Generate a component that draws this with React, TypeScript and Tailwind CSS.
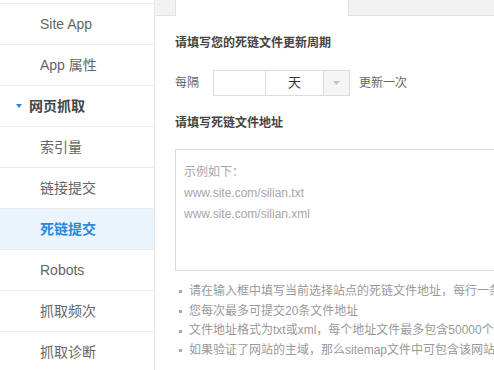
import React from "react";

const font = { fontFamily: '"Liberation Sans", "Noto Sans CJK SC", Arial, sans-serif' };

function Row({ children, active }: { children: React.ReactNode; active?: boolean }) {
  return (
    <div
      className={
        "h-[41px] border-b border-[#ebebeb] flex items-center pl-[40px] text-[14px] " +
        (active ? "bg-[#e9f4fd] text-[#2b86dc] font-bold" : "text-[#666]")
      }
    >
      {children}
    </div>
  );
}

export default function App() {
  return (
    <div className="w-[494px] h-[370px] overflow-hidden bg-white flex" style={font}>
      <div className="w-[155px] shrink-0 border-r border-[#e8e8e8] h-full">
        <div className="h-[4px] border-b border-[#ebebeb]" />
        <Row>Site App</Row>
        <Row>App 属性</Row>
        <div className="h-[41px] border-b border-[#ebebeb] flex items-center pl-[16px] text-[14px] font-bold text-[#444]">
          <svg width="6" height="4" viewBox="0 0 6 4" className="mr-[7px]">
            <polygon points="0,0 6,0 3,4" fill="#2b86dc" />
          </svg>
          网页抓取
        </div>
        <Row>索引量</Row>
        <Row>链接提交</Row>
        <Row active>死链提交</Row>
        <Row>Robots</Row>
        <Row>抓取频次</Row>
        <Row>抓取诊断</Row>
      </div>
      <div className="flex-1 min-w-0 overflow-hidden">
        <div className="h-[16px] bg-[#f2f2f2] border-b border-[#e1e1e1] flex">
          <div className="w-[20px] h-full" />
          <div className="w-[174px] h-[16px] bg-white border-l border-r border-[#e1e1e1]" />
        </div>
        <div className="pl-[20px]">
          <div className="mt-[17px] h-[20px] leading-[20px] text-[12px] font-bold text-[#444]">
            请填写您的死链文件更新周期
          </div>
          <div className="mt-[17px] h-[26px] flex items-center text-[12px] text-[#666]">
            <span className="w-[38px]">每隔</span>
            <div className="w-[53px] h-[26px] border border-[#dcdcdc]" />
            <div className="w-[84px] h-[26px] border border-l-0 border-[#dcdcdc] flex">
              <div className="flex-1 flex items-center justify-center text-[13px] text-[#333]">天</div>
              <div className="w-[26px] bg-[#f5f5f5] border-l border-[#dcdcdc] flex items-center justify-center">
                <svg width="7" height="4" viewBox="0 0 7 4">
                  <polygon points="0,0 7,0 3.5,4" fill="#c4c4c4" />
                </svg>
              </div>
            </div>
            <span className="ml-[9px]">更新一次</span>
          </div>
          <div className="mt-[17px] h-[20px] leading-[20px] text-[12px] font-bold text-[#444]">
            请填写死链文件地址
          </div>
          <div className="mt-[16px] w-[400px] h-[122px] border border-[#dcdcdc] pt-[12px] pl-[8px] text-[12px] leading-[21px] text-[#a6a6a6]">
            <div>示例如下：</div>
            <div>www.site.com/silian.txt</div>
            <div>www.site.com/silian.xml</div>
          </div>
          <ul className="mt-[11px] text-[12px] leading-[19.7px] text-[#999] whitespace-nowrap">
            {[
              "请在输入框中填写当前选择站点的死链文件地址，每行一条",
              "您每次最多可提交20条文件地址",
              "文件地址格式为txt或xml，每个地址文件最多包含50000个网址",
              "如果验证了网站的主域，那么sitemap文件中可包含该网站的子域",
            ].map((t) => (
              <li key={t} className="flex items-center">
                <span className="shrink-0 ml-[4px] mr-[7px] w-[3px] h-[3px] bg-[#aaa] inline-block" />
                <span className="shrink-0">{t}</span>
              </li>
            ))}
          </ul>
        </div>
      </div>
    </div>
  );
}
